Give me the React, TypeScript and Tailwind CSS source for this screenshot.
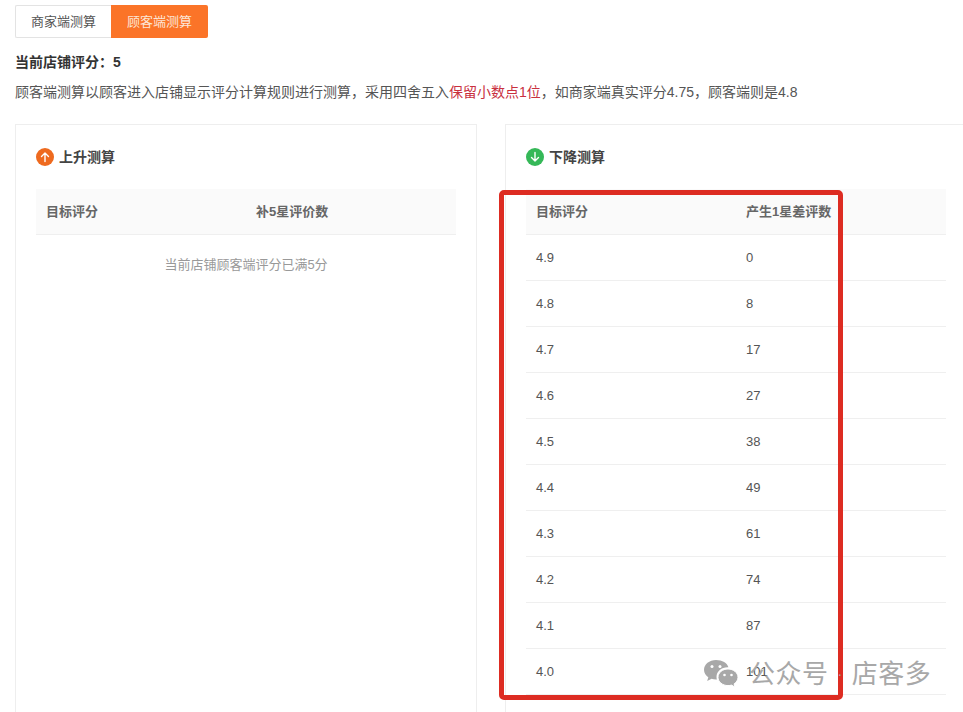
import React from 'react';

const font = { fontFamily: '"Microsoft YaHei", "Liberation Sans", "Noto Sans CJK SC", sans-serif' };

const downRows = [
  ['4.9', '0'],
  ['4.8', '8'],
  ['4.7', '17'],
  ['4.6', '27'],
  ['4.5', '38'],
  ['4.4', '49'],
  ['4.3', '61'],
  ['4.2', '74'],
  ['4.1', '87'],
  ['4.0', '101'],
];

const ArrowBadge: React.FC<{ up?: boolean }> = ({ up }) => (
  <span className={`flex h-[18px] w-[18px] items-center justify-center rounded-full ${up ? 'bg-[#ee6a1f]' : 'bg-[#35b858]'}`}>
    <svg width="12" height="12" viewBox="0 0 12 12" fill="none" stroke="#fff" strokeWidth="1.4" strokeLinecap="round" strokeLinejoin="round">
      {up ? <path d="M6 10.5V2M2.5 5.5 6 2l3.5 3.5" /> : <path d="M6 1.5V10M2.5 6.5 6 10l3.5-3.5" />}
    </svg>
  </span>
);

const TableHead: React.FC<{ second: string }> = ({ second }) => (
  <div className="flex h-[46px] w-[420px] items-center border-b border-[#efefef] bg-[#fafafa] text-[13px] font-bold text-[#666]">
    <span className="w-[210px] pl-[10px]">目标评分</span>
    <span className="pl-[10px]">{second}</span>
  </div>
);

export default function App() {
  return (
    <div className="relative h-[712px] w-[963px] overflow-hidden bg-white" style={font}>
      <div className="pl-[15px] pt-[5px]">
        <div className="flex h-[33px] text-[13px]">
          <div className="flex w-[96px] items-center justify-center rounded-l-[2px] border border-r-0 border-[#e3e3e3] text-[#555]">商家端测算</div>
          <div className="flex w-[97px] items-center justify-center rounded-r-[2px] bg-[#fb7428] text-[#fde6d6]">顾客端测算</div>
        </div>

        <div className="mt-[15px] text-[14px] leading-[18px] font-bold text-[#333]">当前店铺评分：5</div>
        <div className="mt-[12px] whitespace-nowrap text-[14px] leading-[18px] text-[#555]">
          顾客端测算以顾客进入店铺显示评分计算规则进行测算，采用四舍五入<span className="text-[#c9303e]">保留小数点1位</span>，如商家端真实评分4.75，顾客端则是4.8
        </div>

        <div className="mt-[23px] flex gap-[28px]">
          <section className="h-[600px] w-[462px] shrink-0 border border-[#eeeeee] px-[20px] pt-[23px]">
            <h3 className="flex h-[18px] items-center gap-[5px] text-[14px] font-bold text-[#444]">
              <ArrowBadge up />
              上升测算
            </h3>
            <div className="mt-[23px]">
              <TableHead second="补5星评价数" />
              <div className="pt-[21px] text-center text-[13px] leading-[18px] text-[#999]">当前店铺顾客端评分已满5分</div>
            </div>
          </section>

          <section className="h-[600px] w-[462px] shrink-0 border-t border-l border-[#eeeeee] px-[20px] pt-[23px]">
            <h3 className="flex h-[18px] items-center gap-[5px] text-[14px] font-bold text-[#444]">
              <ArrowBadge />
              下降测算
            </h3>
            <div className="mt-[23px]">
              <TableHead second="产生1星差评数" />
              {downRows.map(([score, count]) => (
                <div key={score} className="flex h-[46px] w-[420px] items-center border-b border-[#efefef] pt-[1px] text-[13px] text-[#555]">
                  <span className="w-[210px] pl-[10px]">{score}</span>
                  <span className="pl-[10px]">{count}</span>
                </div>
              ))}
            </div>
          </section>
        </div>
      </div>

      {/* red highlight drawn over the table */}
      <div className="absolute left-[499px] top-[190px] h-[510px] w-[344px] rounded-[5px] border-[5px] border-[#dd2c22]" />

      {/* watermark */}
      <div className="absolute left-[703px] top-[656px] flex items-center text-[26px] leading-[36px] tracking-[0.5px] text-[#a8a8a8]">
        <svg width="36" height="30" viewBox="0 0 36 30" fill="#a8a8a8">
          <path d="M13 1C6.4 1 1 5.3 1 10.7c0 3 1.7 5.7 4.3 7.5L4.2 22l4.4-2.3c1.3.4 2.8.7 4.4.7h.9a8 8 0 0 1-.4-2.5c0-5.4 5-9.6 11-9.6h.9C24.300 4 19.200 1 13 1Z" />
          <path d="M25 10c-5.500 0-10 3.700-10 8.300s4.500 8.300 10 8.300c1.200 0 2.400-.2 3.500-.5l3.500 2-.9-3.200c2.300-1.500 3.900-3.900 3.900-6.600 0-4.600-4.500-8.300-10-8.300Z" stroke="#fff" strokeWidth="1" />
          <circle cx="9" cy="7.500" r="1.500" fill="#fff" />
          <circle cx="17" cy="7.500" r="1.500" fill="#fff" />
          <circle cx="21.500" cy="16" r="1.300" fill="#fff" />
          <circle cx="28.500" cy="16" r="1.300" fill="#fff" />
        </svg>
        <span className="ml-[10px]">公众号</span>
        <span className="mx-[9px] text-[14px]">·</span>
        <span>店客多</span>
      </div>
    </div>
  );
}
